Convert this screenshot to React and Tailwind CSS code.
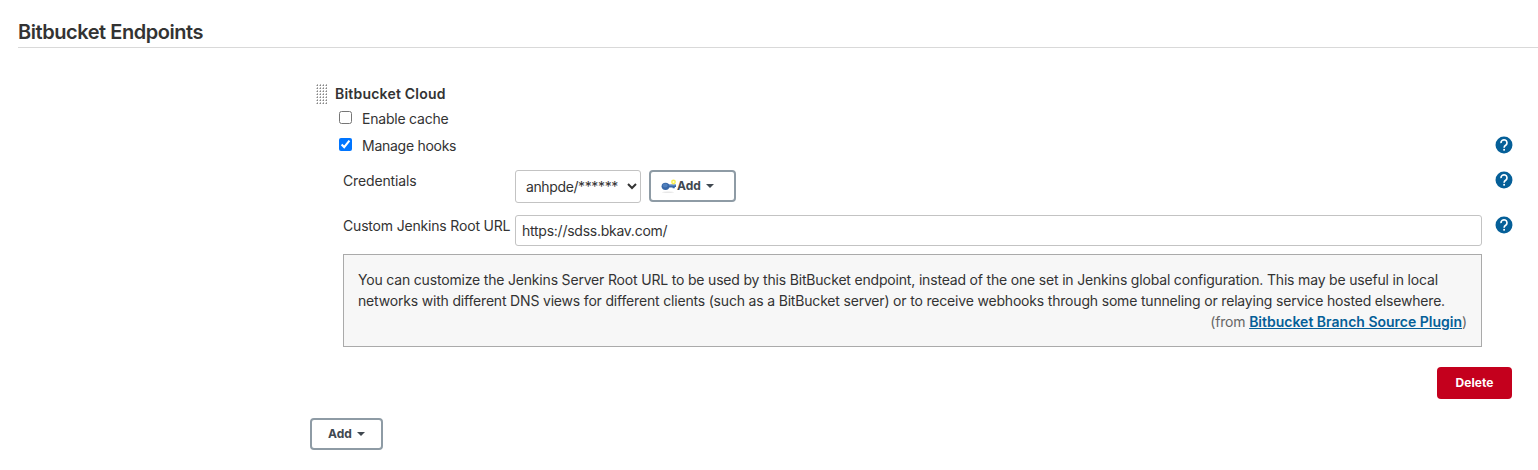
function HelpIcon() {
  return (
    <button type="button" aria-label="Help" className="block size-[18px] shrink-0">
      <svg viewBox="0 0 24 24" className="block size-full">
        <circle cx="12" cy="12" r="11.3" fill="#055f98" />
        <path
          d="M8 9.4 A4 3.9 0 1 1 14.6 12 C12.8 13.2 12.1 13.8 12.1 15.6"
          fill="none"
          stroke="#fff"
          strokeWidth="2.2"
        />
        <rect x="11" y="17.2" width="2.3" height="2.3" fill="#fff" />
      </svg>
    </button>
  );
}

function Caret() {
  return (
    <svg viewBox="0 0 8 4" className="h-1 w-2 shrink-0">
      <path d="M0 0H8L4 4Z" fill="#404850" />
    </svg>
  );
}

function KeyIcon() {
  return (
    <svg viewBox="0 0 16 16" className="size-4 shrink-0">
      <ellipse cx="7" cy="14.3" rx="6" ry="0.7" fill="#e8e8e8" />
      <path d="M6 6.6H15V9H13.8V10.2H11.6V9.4H6Z" fill="#3968a8" />
      <path d="M7 7.3H14.5" stroke="#6f97ca" strokeWidth="0.8" />
      <ellipse cx="4.5" cy="8.3" rx="3.9" ry="3.6" fill="#3968a8" />
      <ellipse cx="4.2" cy="7.6" rx="2.4" ry="2" fill="#5080bd" />
      <circle cx="12.5" cy="4" r="1.7" fill="#fffcd0" stroke="#f8ee4a" strokeWidth="1.4" />
    </svg>
  );
}

function DragHandle() {
  const cells = [];
  for (let row = 0; row < 7; row++) {
    for (let col = 0; col < 4; col++) {
      const x = col * 3;
      const y = row * 3;
      cells.push(
        <g key={`${row}-${col}`}>
          <rect x={x + 1} y={y} width="1" height="1" fill="#b5b5b5" />
          <rect x={x} y={y + 1} width="1" height="1" fill="#c8c8c8" />
          <rect x={x + 1} y={y + 1} width="1" height="1" fill="#858585" />
        </g>
      );
    }
  }
  return (
    <svg viewBox="0 0 12 21" className="h-[21px] w-3 shrink-0">
      {cells}
    </svg>
  );
}

export default function App() {
  return (
    <main className="h-[470px] w-[1538px] overflow-hidden bg-white font-['Inter','Liberation_Sans',sans-serif] text-sm leading-[21px] text-[#333]">
      <header className="ml-[18px] flex h-12 items-end border-b border-[#d9d9d9] pb-[1px]">
        <h1 className="text-[20px] leading-[28px] font-semibold tracking-[-0.45px] whitespace-nowrap">Bitbucket Endpoints</h1>
      </header>

      <section className="ml-[310px] w-[1202px] pt-9">
        <div className="flex h-[21px] items-center pl-1.5">
          <DragHandle />
          <h2 className="ml-[7px] pb-px text-sm leading-5 font-semibold tracking-[0.21px] whitespace-nowrap">Bitbucket Cloud</h2>
        </div>

        <label className="flex h-[27px] w-fit items-center pl-[29px]">
          <input type="checkbox" className="mb-[2px] size-[13px]" />
          <span className="ml-2.5 pb-px tracking-[-0.22px]">Enable cache</span>
        </label>
        <div className="flex h-[27px] items-center justify-between">
          <label className="flex items-center pl-[29px]">
            <input type="checkbox" defaultChecked className="mb-[2px] size-[13px]" />
            <span className="ml-2.5 pb-px tracking-[-0.27px]">Manage hooks</span>
          </label>
          <div className="-mr-[1px] pb-[2px]">
            <HelpIcon />
          </div>
        </div>

        <div className="mt-[11px] flex h-[45px] items-start pl-[33px]">
          <span className="w-[172px] shrink-0 tracking-[-0.15px]">Credentials</span>
          <select className="h-[33px] w-[126px] rounded-[3px] border border-[#c3c3c3] bg-white pl-1.5 text-sm tracking-[-0.38px]">
            <option>anhpde/******</option>
          </select>
          <button
            type="button"
            className="ml-2 flex h-8 w-[87px] items-center rounded-[4px] border-2 border-[#8e9ba5] pl-2.5 text-[12px] font-bold text-[#404850]"
          >
            <KeyIcon />
            <span className="pb-0.5">Add</span>
            <span className="ml-[5px] flex"><Caret /></span>
          </button>
          <div className="-mr-[1px] ml-auto pt-px">
            <HelpIcon />
          </div>
        </div>

        <div className="flex h-[39px] items-start pl-[33px]">
          <span className="w-[172px] shrink-0 tracking-[-0.18px] whitespace-nowrap">Custom Jenkins Root URL</span>
          <input
            type="text"
            defaultValue="https://sdss.bkav.com/"
            className="h-[31px] w-[967px] rounded-[3px] border border-[#c3c3c3] px-1.5 text-sm tracking-[-0.25px]"
          />
          <div className="-mr-[1px] ml-auto pt-px">
            <HelpIcon />
          </div>
        </div>

        <div className="ml-[33px] h-[93px] w-[1139px] border border-[#aaa] bg-[#f7f7f7] px-3.5 pt-3.5">
          <p className="tracking-[-0.182px] whitespace-nowrap">
            You can customize the Jenkins Server Root URL to be used by this BitBucket endpoint, instead of the one set in Jenkins global configuration. This may be useful in local
            <br />
            networks with different DNS views for different clients (such as a BitBucket server) or to receive webhooks through some tunneling or relaying service hosted elsewhere.
          </p>
          <p className="text-right tracking-[-0.18px] text-[#666]">
            (from <a className="font-semibold tracking-normal text-[#055f98] underline">Bitbucket Branch Source Plugin</a>)
          </p>
        </div>

        <div className="mt-5 flex justify-end">
          <button type="button" className="h-8 w-[75px] rounded-[4px] bg-[#c4001d] pb-0.5 text-[12px] font-bold tracking-[0.1px] text-white">
            Delete
          </button>
        </div>
        <button
          type="button"
          className="mt-[19px] flex h-8 w-[73px] items-center rounded-[4px] border-2 border-[#8e9ba5] pl-4 text-[12px] font-bold text-[#404850]"
        >
          <span className="pb-0.5">Add</span>
          <span className="ml-[5px] flex"><Caret /></span>
        </button>
      </section>
    </main>
  );
}
